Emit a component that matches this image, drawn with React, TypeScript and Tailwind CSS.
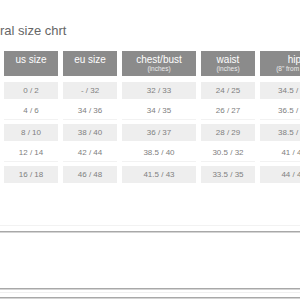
const columns = [
  { title: "us size", sub: "", w: "w-[54px]" },
  { title: "eu size", sub: "", w: "w-[54px]" },
  { title: "chest/bust", sub: "(inches)", w: "w-[74px]" },
  { title: "waist", sub: "(inches)", w: "w-[54px]" },
  { title: "hips", sub: "(8\" from waist)", w: "w-[74px]" },
];

const rows = [
  ["0 / 2", "- / 32", "32 / 33", "24 / 25", "34.5 / 35.5"],
  ["4 / 6", "34 / 36", "34 / 35", "26 / 27", "36.5 / 37.5"],
  ["8 / 10", "38 / 40", "36 / 37", "28 / 29", "38.5 / 39.5"],
  ["12 / 14", "42 / 44", "38.5 / 40", "30.5 / 32", "41 / 42.5"],
  ["16 / 18", "46 / 48", "41.5 / 43", "33.5 / 35", "44 / 45.5"],
];

export default function App() {
  return (
    <div className="w-[300px] h-[300px] overflow-hidden bg-white font-['Liberation_Sans',Arial,sans-serif]">
      <div className="pt-[23px]">
        <h2 className="text-[13px] leading-[15px] text-[#666666] font-normal whitespace-nowrap">
          ral size chrt
        </h2>
      </div>

      <div className="mt-[13px] flex gap-[5px] pl-[4px]">
        {columns.map((c) => (
          <div
            key={c.title}
            className={`${c.w} shrink-0 h-[25px] bg-[#8b8b8b] flex flex-col items-center pt-[3px] text-white`}
          >
            <span className="text-[10px] leading-[11px] whitespace-nowrap">{c.title}</span>
            {c.sub && (
              <span className="text-[6.5px] leading-[8px] whitespace-nowrap text-[#ececec]">{c.sub}</span>
            )}
          </div>
        ))}
      </div>

      <div className="mt-[6px] flex flex-col gap-[4px]">
        {rows.map((r, i) => (
          <div key={i} className="flex gap-[5px] pl-[4px]">
            {r.map((v, j) => (
              <div
                key={j}
                className={`${columns[j].w} shrink-0 h-[17px] flex items-center justify-center text-[8px] text-[#808080] whitespace-nowrap ${
                  i % 2 === 0 ? "bg-[#eeeeee]" : "bg-white border-b border-[#f2f2f2]"
                }`}
              >
                {v}
              </div>
            ))}
          </div>
        ))}
      </div>

      <div className="mt-[42px] h-px bg-[#f2f2f2]" />
      <div className="mt-[5px] h-px bg-[#a8a8a8]" />
      <div className="h-px bg-[#d4d4d4]" />
      <div className="mt-[55px] h-px bg-[#a8a8a8]" />
      <div className="h-px bg-[#d4d4d4]" />
      <div className="mt-[2px] h-px bg-[#f0f0f0]" />
      <div className="mt-[4px] h-px bg-[#a8a8a8]" />
      <div className="h-px bg-[#d4d4d4]" />
    </div>
  );
}
